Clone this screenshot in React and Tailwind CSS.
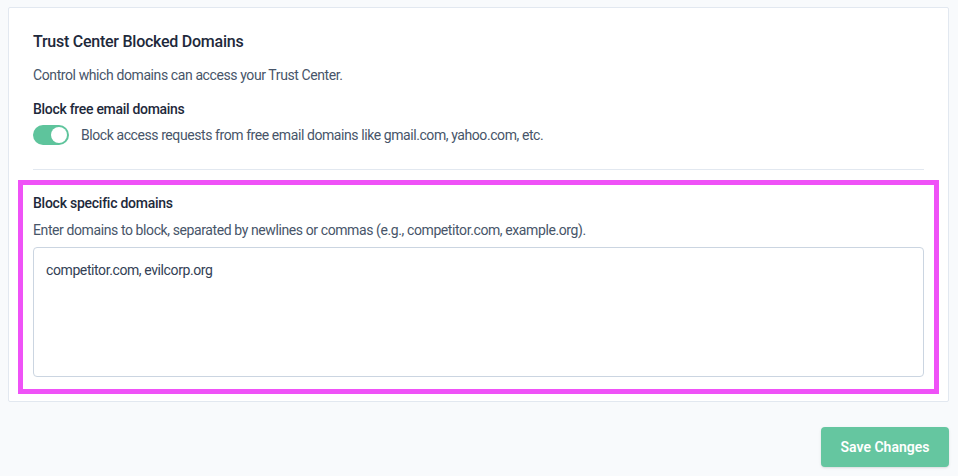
export default function App() {
  return (
    <div
      className="min-h-[476px] bg-[#f8fafc] pl-2 pr-[9px] pt-[7px] text-[#1e293b]"
      style={{ fontFamily: "Roboto, 'Liberation Sans', sans-serif" }}
    >
      <div className="rounded-[2px] border border-[#e2e8f0] bg-white px-6 pt-[22px] pb-6">
        <h2 className="text-base leading-6 font-medium tracking-[-0.25px] text-[#1e293b]">
          Trust Center Blocked Domains
        </h2>
        <p className="mt-[11px] text-sm leading-5 tracking-[-0.4px] text-[#475569]">
          Control which domains can access your Trust Center.
        </p>

        <div className="mt-[14px]">
          <p className="text-sm leading-5 font-medium tracking-[-0.3px] text-[#1e293b]">
            Block free email domains
          </p>
          <div className="mt-[6px] flex items-center gap-3">
            <Toggle />
            <span className="text-sm leading-5 tracking-[-0.42px] text-[#475569]">
              Block access requests from free email domains like gmail.com,
              yahoo.com, etc.
            </span>
          </div>
        </div>

        <div className="mt-6 border-t border-[#e2e8f0]" />

        <div className="relative mt-[23px]">
          <span className="pointer-events-none absolute -top-[13px] -left-[15px] -right-[15px] -bottom-[17px] border-[5px] border-[#ef52f7]" />
          <p className="text-sm leading-5 font-medium tracking-[-0.25px] text-[#1e293b]">
            Block specific domains
          </p>
          <p className="mt-[7px] text-sm leading-5 tracking-[-0.4px] text-[#475569]">
            Enter domains to block, separated by newlines or commas (e.g.,
            competitor.com, example.org).
          </p>
          <textarea
            defaultValue="competitor.com, evilcorp.org"
            className="mt-[7px] block h-[130px] w-full resize-none rounded-[4px] border border-[#cbd5e1] bg-white px-3 py-3 text-sm leading-5 tracking-[-0.4px] text-[#334155] outline-none"
          />
        </div>
      </div>

      <div className="mt-[25px] flex justify-end">
        <button className="h-10 w-32 rounded-[4px] bg-[#65c6a0] text-sm font-semibold text-white shadow-sm">
          Save Changes
        </button>
      </div>
    </div>
  );
}

function Toggle() {
  return (
    <span className="relative inline-flex h-5 w-9 shrink-0 items-center rounded-full bg-[#5ec49c]">
      <span className="absolute right-[2px] h-4 w-4 rounded-full bg-white" />
    </span>
  );
}
